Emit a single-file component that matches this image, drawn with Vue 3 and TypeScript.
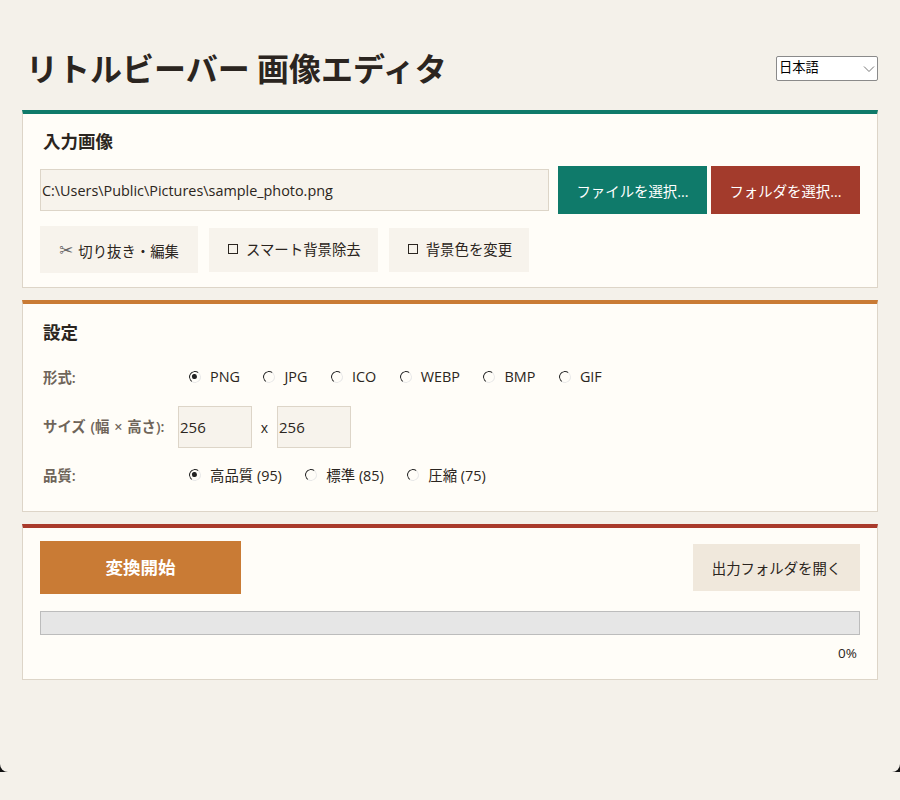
<script setup lang="ts">
import { ref } from "vue";

const inputPath = ref("C:\\Users\\Public\\Pictures\\sample_photo.png");
const language = ref("ja");
const format = ref("PNG");
const width = ref("256");
const height = ref("256");
const quality = ref("95");

const formats = ["PNG", "JPG", "ICO", "WEBP", "BMP", "GIF"];
const qualities = [
  { value: "95", label: "高品質 (95)" },
  { value: "85", label: "標準 (85)" },
  { value: "75", label: "圧縮 (75)" },
];
</script>

<template>
  <div class="frame">
    <div class="window">
      <header class="header">
        <h1 class="title">リトルビーバー 画像エディタ</h1>
        <div class="lang">
          <select v-model="language" class="lang-select">
            <option value="ja">日本語</option>
            <option value="en">English</option>
          </select>
          <svg class="lang-arrow" width="12" height="8" viewBox="0 0 12 8">
            <path d="M1 1.5 6 6.5l5-5" fill="none" stroke="#777" stroke-width="1" />
          </svg>
        </div>
      </header>

      <section class="panel panel-input">
        <h2 class="panel-title">入力画像</h2>
        <div class="file-row">
          <input v-model="inputPath" class="field path-field" type="text" />
          <button class="btn btn-file" type="button">ファイルを選択...</button>
          <button class="btn btn-folder" type="button">フォルダを選択...</button>
        </div>
        <div class="tool-row">
          <button class="btn btn-tool btn-crop" type="button"><span class="scissors">✂</span>切り抜き・編集</button>
          <button class="btn btn-tool" type="button"><span class="box"></span>スマート背景除去</button>
          <button class="btn btn-tool" type="button"><span class="box"></span>背景色を変更</button>
        </div>
      </section>

      <section class="panel panel-settings">
        <h2 class="panel-title">設定</h2>
        <div class="settings-grid">
          <span class="label">形式:</span>
          <div class="radio-group">
            <label v-for="f in formats" :key="f" class="radio">
              <input v-model="format" type="radio" name="format" :value="f" />
              <span>{{ f }}</span>
            </label>
          </div>

          <span class="label">サイズ (幅 × 高さ):</span>
          <div class="size-row">
            <input v-model="width" class="field size-field" type="text" />
            <span class="times">x</span>
            <input v-model="height" class="field size-field" type="text" />
          </div>

          <span class="label">品質:</span>
          <div class="radio-group">
            <label v-for="q in qualities" :key="q.value" class="radio">
              <input v-model="quality" type="radio" name="quality" :value="q.value" />
              <span>{{ q.label }}</span>
            </label>
          </div>
        </div>
      </section>

      <section class="panel panel-action">
        <div class="action-row">
          <button class="btn btn-convert" type="button">変換開始</button>
          <button class="btn btn-output" type="button">出力フォルダを開く</button>
        </div>
        <div class="progress"></div>
        <div class="percent">0%</div>
      </section>
    </div>
  </div>
</template>

<style>
html,
body {
  margin: 0;
  background: #f4f1ea;
}
</style>

<style scoped>
.frame {
  height: 772px;
  background: #111;
  font-family: "Open Sans", "Noto Sans CJK JP", sans-serif;
  font-size: 14.4px;
  color: #2b2520;
}

.window {
  box-sizing: border-box;
  height: 772px;
  padding: 36px 22px 0;
  background: #f4f1ea;
  border-radius: 0 0 8px 8px;
}

.header {
  display: flex;
  align-items: center;
  justify-content: space-between;
  height: 64px;
  margin-bottom: 10px;
  padding-left: 4px;
}

.title {
  margin: 0;
  padding-bottom: 2px;
  font-family: "Noto Sans CJK JP", sans-serif;
  font-size: 32px;
  font-weight: 700;
  line-height: 44px;
  color: #2b2520;
}

.lang {
  position: relative;
  width: 102px;
  height: 25px;
}

.lang-select {
  appearance: none;
  box-sizing: border-box;
  width: 100%;
  height: 100%;
  padding: 0 0 3px 2px;
  background: #fff;
  border: 1px solid #8a8a8a;
  border-radius: 2px;
  color: #000;
  font-family: "Noto Sans CJK JP", sans-serif;
  font-size: 13.3px;
}

.lang-arrow {
  position: absolute;
  top: 9px;
  right: 3px;
  pointer-events: none;
}

.panel {
  box-sizing: border-box;
  margin-bottom: 12px;
  padding: 0 17px;
  background: #fffdf8;
  border: 1px solid #ddd5c8;
  border-top: 4px solid #0f7a6a;
}

.panel-input {
  height: 178px;
}

.panel-settings {
  height: 212px;
  border-top-color: #c97b35;
}

.panel-action {
  height: 156px;
  border-top-color: #a93a2b;
}

.panel-title {
  margin: 0;
  padding-left: 3px;
  font-family: "Noto Sans CJK JP", sans-serif;
  font-size: 17.5px;
  font-weight: 700;
  line-height: 26px;
}

.panel-input .panel-title {
  padding-top: 14px;
}

.panel-settings .panel-title {
  padding-top: 15px;
}

.file-row {
  display: flex;
  align-items: center;
  margin-top: 12px;
}

.field {
  box-sizing: border-box;
  height: 42px;
  padding: 0 1px;
  background: #f7f3ec;
  border: 1px solid #ddd5c8;
  border-radius: 0;
  outline: none;
  color: #2b2520;
  font-family: inherit;
  font-size: 14.4px;
}

.path-field {
  width: 509px;
  margin-right: 9px;
}

.btn {
  box-sizing: border-box;
  margin: 0;
  padding: 0;
  border: none;
  border-radius: 0;
  cursor: pointer;
  color: #2b2520;
  font-family: inherit;
  font-size: 14.4px;
}

.btn-file,
.btn-folder {
  width: 149px;
  height: 48px;
  color: #fff;
}

.btn-file {
  margin-right: 4px;
  background: #0f7a6a;
}

.btn-folder {
  background: #a33b2c;
}

.tool-row {
  display: flex;
  align-items: center;
  gap: 11px;
  margin-top: 12px;
}

.btn-tool {
  display: inline-flex;
  align-items: center;
  justify-content: center;
  height: 44px;
  padding: 0 17px 2px 19px;
  background: #f7f3ec;
}

.btn-crop {
  height: 47px;
  padding: 1px 19px 0 19px;
}

.scissors {
  margin-right: 5px;
  color: #666;
  font-family: "DejaVu Sans", sans-serif;
  font-size: 17px;
  line-height: 1;
}

.box {
  box-sizing: border-box;
  width: 10px;
  height: 10px;
  margin-right: 8px;
  border: 1px solid #2b2520;
}

.settings-grid {
  display: grid;
  grid-template-columns: 138px 1fr;
  row-gap: 7px;
  align-items: center;
  margin-top: 12px;
}

.label {
  padding: 0 0 3px 3px;
  color: #6f655a;
  font-weight: 600;
  word-spacing: 1px;
}

.radio-group {
  box-sizing: border-box;
  display: flex;
  align-items: center;
  gap: 23.5px;
  height: 42px;
  padding: 0 0 3px 11px;
}

.radio {
  display: inline-flex;
  align-items: center;
  gap: 9px;
  cursor: pointer;
}

.radio input {
  appearance: none;
  box-sizing: border-box;
  position: relative;
  width: 12px;
  height: 12px;
  margin: 0;
  background: #fffdf8;
  border: 1.5px solid;
  border-color: #2b2b2b #e8e8e8 #e8e8e8 #2b2b2b;
  border-radius: 50%;
  transform: rotate(-8deg);
}

.radio input:checked::after {
  content: "";
  position: absolute;
  top: 2px;
  left: 2px;
  width: 5px;
  height: 5px;
  background: #222;
  border-radius: 50%;
}

.size-row {
  display: flex;
  align-items: center;
}

.size-field {
  width: 74px;
  font-size: 15px;
}

.times {
  width: 25px;
  text-align: center;
  font-size: 14px;
}

.action-row {
  display: flex;
  align-items: center;
  justify-content: space-between;
  margin-top: 13px;
}

.btn-convert {
  width: 201px;
  height: 53px;
  padding-bottom: 3px;
  background: #c97b35;
  color: #fff;
  font-family: "Noto Sans CJK JP", sans-serif;
  font-size: 17.5px;
  font-weight: 700;
}

.btn-output {
  width: 167px;
  height: 47px;
  background: #f0e8dc;
}

.progress {
  box-sizing: border-box;
  height: 24px;
  margin-top: 17px;
  background: #e6e6e6;
  border: 1px solid #bcbcbc;
}

.percent {
  margin-top: 9px;
  padding-right: 3px;
  text-align: right;
  font-size: 13.5px;
  line-height: 18px;
}
</style>
